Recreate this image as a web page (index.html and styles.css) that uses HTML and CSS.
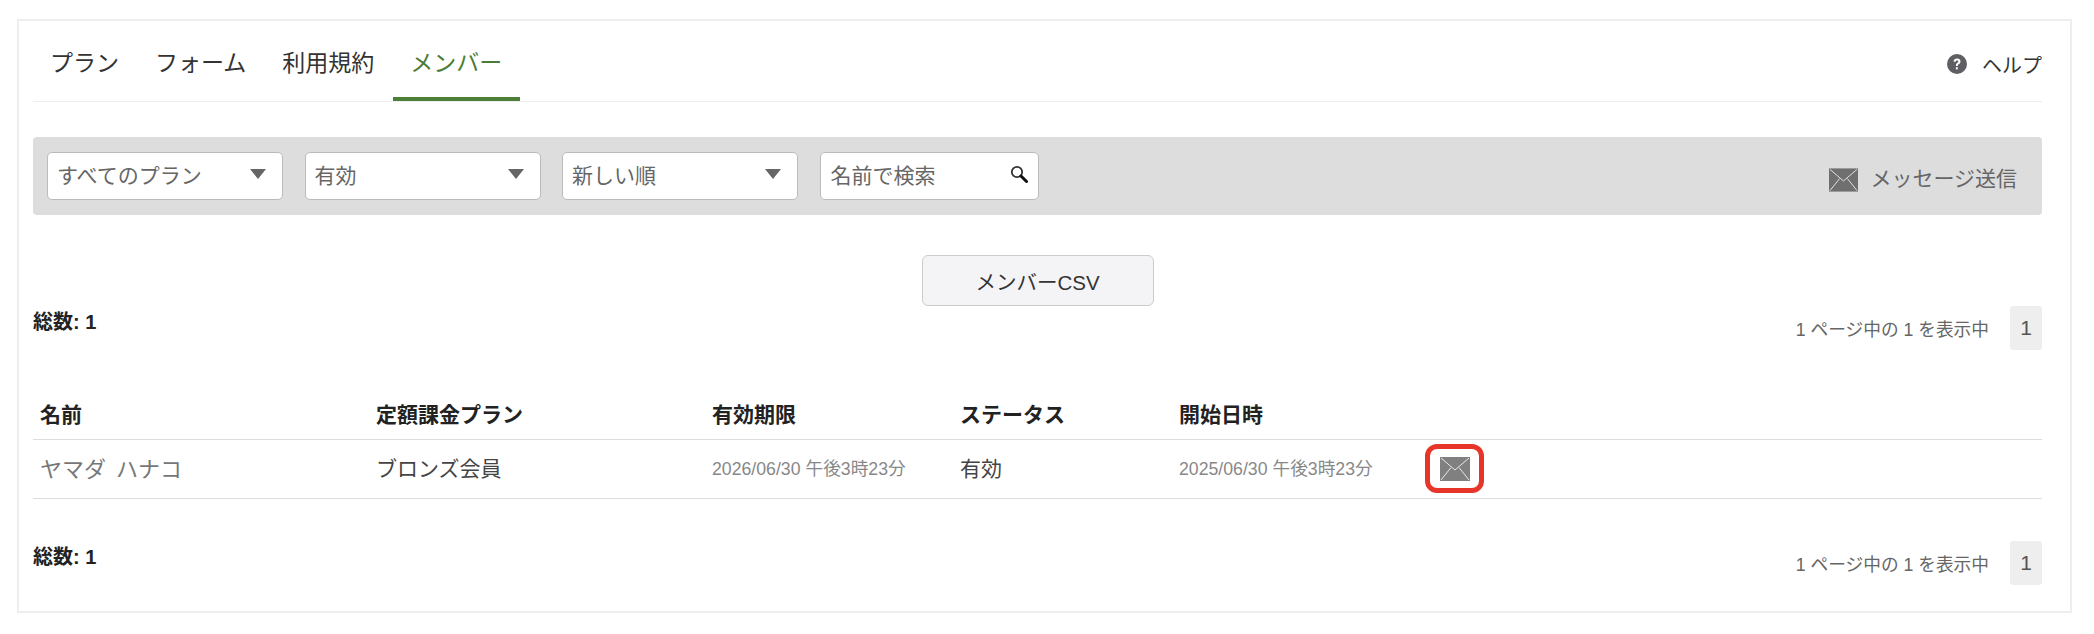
FILE: index.html
```html
<!DOCTYPE html>
<html lang="ja">
<head>
<meta charset="utf-8">
<title>メンバー</title>
<link rel="stylesheet" href="styles.css">
</head>
<body>
<main class="card">
  <nav class="tabs">
    <a class="tab">プラン</a>
    <a class="tab">フォーム</a>
    <a class="tab">利用規約</a>
    <a class="tab tab-active">メンバー</a>
    <a class="help">
      <svg class="help-icon" viewBox="0 0 20 20"><circle cx="10" cy="10" r="10" fill="#5f5f63"/><path d="M6.600 7.800c0-2 1.500-3.200 3.500-3.200s3.400 1.100 3.400 2.900c0 2.400-2.800 2.500-2.800 4.400H8.900c0-2.900 2.500-2.900 2.500-4.300 0-.7-.5-1.200-1.300-1.200s-1.400.5-1.400 1.400z" fill="#fff"/><rect x="8.900" y="13.200" width="1.900" height="2.200" fill="#fff"/></svg>
      <span>ヘルプ</span>
    </a>
  </nav>

  <section class="filter-bar">
    <div class="select"><span>すべてのプラン</span><i class="caret"></i></div>
    <div class="select"><span>有効</span><i class="caret"></i></div>
    <div class="select"><span>新しい順</span><i class="caret"></i></div>
    <div class="search"><span>名前で検索</span>
      <svg class="search-icon" viewBox="0 0 18 18"><circle cx="7" cy="7" r="5.200" fill="none" stroke="#333" stroke-width="1.800"/><path d="M11 11l5.500 5.500" stroke="#111" stroke-width="3" stroke-linecap="round"/></svg>
    </div>
    <a class="send">
      <svg class="mail mail-large" viewBox="0 0 30 24"><rect width="30" height="24" fill="#6f6f6f"/><path d="M1 1l14 12L29 1M1 23l10-12.500M29 23L19 10.500" fill="none" stroke="#e4e4e4" stroke-width="1"/></svg>
      <span>メッセージ送信</span>
    </a>
  </section>

  <div class="csv-row"><button class="csv-button">メンバーCSV</button></div>

  <div class="summary">
    <strong class="total">総数: 1</strong>
    <div class="pager"><span class="pager-text">1 ページ中の 1 を表示中</span><span class="page">1</span></div>
  </div>

  <table class="members">
    <colgroup>
      <col class="col-name"><col class="col-plan"><col class="col-expiry"><col class="col-status"><col class="col-start"><col>
    </colgroup>
    <thead>
      <tr><th>名前</th><th>定額課金プラン</th><th>有効期限</th><th>ステータス</th><th>開始日時</th><th></th></tr>
    </thead>
    <tbody>
      <tr>
        <td class="cell-name">ヤマダ ハナコ</td>
        <td>ブロンズ会員</td>
        <td class="cell-date">2026/06/30 午後3時23分</td>
        <td>有効</td>
        <td class="cell-date">2025/06/30 午後3時23分</td>
        <td><span class="mail-box"><svg class="mail" viewBox="0 0 30 24"><rect width="30" height="24" fill="#808080"/><path d="M1 1l14 12L29 1M1 23l10-12.500M29 23L19 10.500" fill="none" stroke="#e8e8e8" stroke-width="1"/></svg></span></td>
      </tr>
    </tbody>
  </table>

  <div class="summary summary-bottom">
    <strong class="total">総数: 1</strong>
    <div class="pager"><span class="pager-text">1 ページ中の 1 を表示中</span><span class="page">1</span></div>
  </div>
</main>
</body>
</html>
```

FILE: styles.css
```css
* { box-sizing: border-box; }

body {
  margin: 0;
  background: #fff;
  color: #333;
  font-family: "Liberation Sans", "Noto Sans CJK JP", sans-serif;
}

.card {
  width: 2055px;
  height: 594px;
  margin: 19px 0 0 17px;
  padding: 0 28px 0 14px;
  border: 2px solid #eee;
}

.tabs {
  display: flex;
  height: 81px;
  border-bottom: 1px solid #eee;
}

.tab {
  display: block;
  height: 80px;
  padding: 24px 18px 0;
  font-size: 23px;
  line-height: 36px;
  color: #333;
  white-space: nowrap;
}

.tab:first-child { padding-left: 17px; }

.tab-active {
  margin-left: 1px;
  padding-left: 17px;
  color: #4a7c35;
  border-bottom: 4px solid #4e7f38;
}

.help {
  display: flex;
  align-items: center;
  gap: 15px;
  margin-left: auto;
  padding-top: 6px;
  height: 80px;
  font-size: 20px;
  color: #333;
}

.help-icon { width: 20px; height: 20px; }

.filter-bar {
  display: flex;
  align-items: center;
  gap: 21.500px;
  height: 78px;
  margin-top: 35px;
  padding: 0 25px 0 14px;
  background: #ddd;
  border-radius: 4px;
}

.select, .search {
  display: flex;
  align-items: center;
  justify-content: space-between;
  height: 48px;
  padding-bottom: 4px;
  background: #fff;
  border: 1px solid #bbb;
  border-radius: 5px;
  font-size: 21px;
  color: #666;
}

.select {
  width: 236px;
  padding-left: 9px;
  padding-right: 16px;
}

.search {
  width: 219px;
  padding-left: 10px;
  padding-right: 10px;
}

.caret {
  width: 0;
  height: 0;
  border-left: 8px solid transparent;
  border-right: 8px solid transparent;
  border-top: 10px solid #666;
}

.search-icon { width: 18px; height: 18px; }

.send {
  display: flex;
  align-items: center;
  gap: 12px;
  margin-left: auto;
  padding-top: 2px;
  font-size: 21px;
  color: #666;
}

.mail {
  display: block;
  width: 30px;
  height: 24px;
}

.mail-large {
  width: 29px;
  margin-top: 5px;
}

.csv-row {
  display: flex;
  justify-content: center;
  margin-top: 40px;
}

.csv-button {
  width: 232px;
  height: 51px;
  background: #f4f4f7;
  border: 1px solid #ccc;
  border-radius: 6px;
  font-family: inherit;
  font-size: 20.500px;
  color: #333;
}

.summary {
  display: flex;
  justify-content: space-between;
  height: 44px;
}

.total {
  padding-top: 3px;
  font-size: 20px;
  line-height: 26px;
  color: #222;
}

.pager {
  display: flex;
  align-items: center;
  gap: 21px;
}

.pager-text {
  font-size: 17.700px;
  color: #666;
}

.page {
  display: flex;
  align-items: center;
  justify-content: center;
  width: 32px;
  height: 44px;
  background: #eee;
  border-radius: 3px;
  font-size: 21px;
  color: #555;
}

.members {
  width: 100%;
  margin-top: 38px;
  border-collapse: collapse;
  table-layout: fixed;
}

.col-name, .col-plan { width: 336px; }
.col-expiry { width: 248px; }
.col-status { width: 219px; }
.col-start { width: 246px; }

.members th {
  height: 51px;
  padding: 0 0 1px 7px;
  border-bottom: 1px solid #ddd;
  text-align: left;
  font-size: 21px;
  font-weight: 700;
  color: #222;
}

.members td {
  height: 59px;
  padding: 0 0 3px 7px;
  border-bottom: 1px solid #ddd;
  font-size: 21px;
  color: #444;
}

.members .cell-name {
  font-size: 22px;
  word-spacing: 4px;
  color: #777;
}

.members .cell-date {
  font-size: 17.700px;
  color: #888;
}

.mail-box {
  display: flex;
  align-items: center;
  justify-content: center;
  width: 59px;
  height: 49px;
  margin-top: 3px;
  border: 5px solid #e8352a;
  border-radius: 12px;
}

.summary-bottom { margin-top: 42px; }
```
